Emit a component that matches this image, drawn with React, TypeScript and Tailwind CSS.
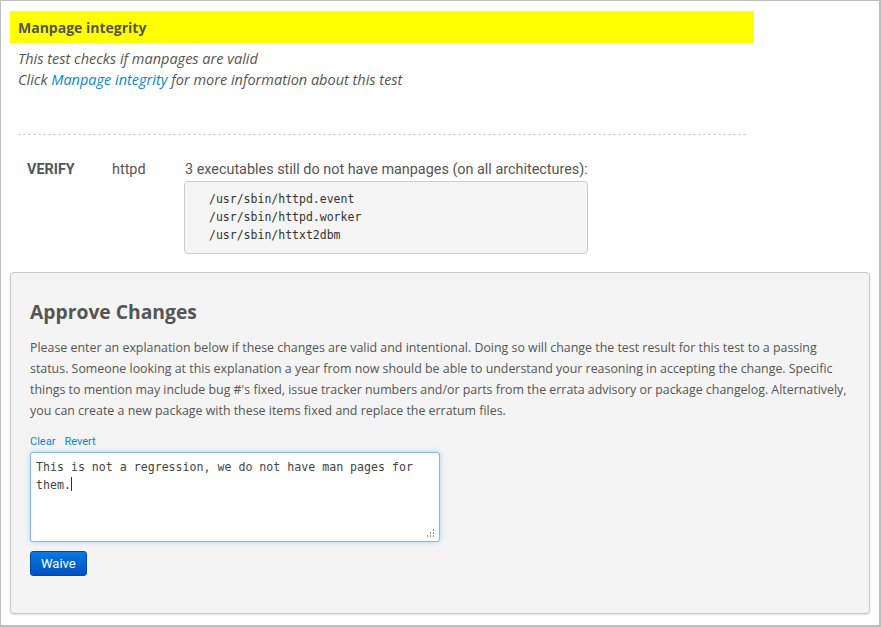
export default function App() {
  return (
    <div className="w-[881px] h-[627px] bg-white">
      <div
        className="h-full border border-[#bdbdbd] border-b-2 border-r-2 px-[9px] pt-[10px]"
        style={{ fontFamily: '"Open Sans", sans-serif' }}
      >
        {/* Test title */}
        <div className="w-[744px] h-[32px] bg-[#ffff00] pl-[8px] flex items-center">
          <span className="text-[14px] font-bold text-[#555]">Manpage integrity</span>
        </div>
        <div className="pl-[8px] pt-[5px] italic text-[14.5px] leading-[21px] text-[#555]">
          <div>This test checks if manpages are valid</div>
          <div>
            Click <a href="#" className="text-[#0a88cc]">Manpage integrity</a> for more information about
            this test
          </div>
        </div>

        <div className="ml-[8px] mt-[44px] w-[728px] border-t border-dashed border-[#cfcfcf]" />

        {/* Result row */}
        <div
          className="flex pt-[25px] text-[14.4px] text-[#555]"
          style={{ fontFamily: 'Roboto, sans-serif' }}
        >
          <div className="w-[102px] pl-[17px] font-bold leading-[20px]">VERIFY</div>
          <div className="w-[72px] leading-[20px]">httpd</div>
          <div>
            <div className="pl-[1px] leading-[20px]">
              3 executables still do not have manpages (on all architectures):
            </div>
            <pre
              className="mt-[1px] w-[404px] h-[73px] bg-[#f5f5f5] border border-[#ccc] rounded-[4px] pl-[24px] pt-[8px] text-[11.5px] leading-[18px] text-[#333]"
              style={{ fontFamily: '"DejaVu Sans Mono", monospace' }}
            >
              {"/usr/sbin/httpd.event\n/usr/sbin/httpd.worker\n/usr/sbin/httxt2dbm"}
            </pre>
          </div>
        </div>

        {/* Approve panel */}
        <div className="mt-[18px] w-[860px] h-[342px] bg-[#f4f4f4] border border-[#c8c8c8] rounded-[4px] shadow-[0_1px_2px_rgba(0,0,0,0.12)] px-[19px] pt-[25px]">
          <h2 className="text-[19.3px] font-bold text-[#555] leading-[28px]">Approve Changes</h2>
          <p className="mt-[11px] text-[12.4px] leading-[21px] text-[#555] whitespace-nowrap">
            Please enter an explanation below if these changes are valid and intentional. Doing so will change the
            test result for this test to a passing
            <br />
            status. Someone looking at this explanation a year from now should be able to understand your reasoning
            in accepting the change. Specific
            <br />
            things to mention may include bug #'s fixed, issue tracker numbers and/or parts from the errata advisory
            or package changelog. Alternatively,
            <br />
            you can create a new package with these items fixed and replace the erratum files.
          </p>
          <div
            className="mt-[14px] flex gap-[9px] text-[11px] leading-[14px] text-[#0a88cc]"
            style={{ fontFamily: 'Roboto, sans-serif' }}
          >
            <a href="#">Clear</a>
            <a href="#">Revert</a>
          </div>
          <div className="relative mt-[3px] w-[410px] h-[90px] bg-white border border-[#85b8e6] rounded-[3px] shadow-[0_0_5px_rgba(82,168,236,0.45)] px-[5px] pt-[5px]">
            <div
              className="text-[11.6px] leading-[18px] text-[#444]"
              style={{ fontFamily: '"DejaVu Sans Mono", monospace' }}
            >
              This is not a regression, we do not have man pages for them.
              <span className="inline-block w-px h-[14px] bg-[#333] align-[-2px]" />
            </div>
            <svg className="absolute right-[4px] bottom-[3px]" width="10" height="10" viewBox="0 0 10 10">
              <g fill="#999">
                <rect x="8" y="1" width="1" height="1" />
                <rect x="8" y="2" width="1" height="1" />
                <rect x="5" y="4" width="1" height="1" />
                <rect x="8" y="4" width="1" height="1" />
                <rect x="5" y="5" width="1" height="1" />
                <rect x="8" y="5" width="1" height="1" />
                <rect x="2" y="7" width="1" height="1" />
                <rect x="5" y="7" width="1" height="1" />
                <rect x="8" y="7" width="1" height="1" />
                <rect x="2" y="8" width="1" height="1" />
                <rect x="5" y="8" width="1" height="1" />
                <rect x="8" y="8" width="1" height="1" />
              </g>
            </svg>
          </div>
          <button
            className="mt-[9px] h-[25px] px-[10px] rounded-[3px] border border-[#0049a8] bg-gradient-to-b from-[#0a7ae0] to-[#0050c0] text-white text-[13px] leading-[22px]"
            style={{ fontFamily: 'Roboto, sans-serif' }}
          >
            Waive
          </button>
        </div>
      </div>
    </div>
  );
}
